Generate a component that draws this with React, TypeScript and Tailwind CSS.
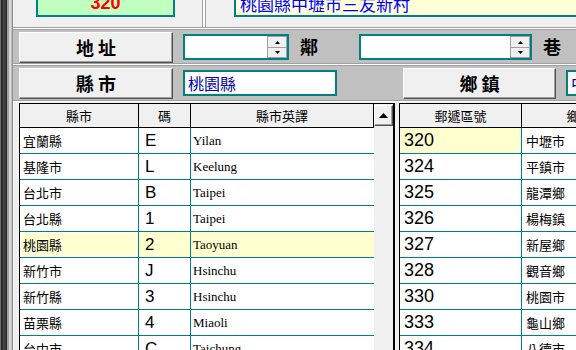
const cjk = { fontFamily: '"Noto Sans CJK TC", "Noto Sans", sans-serif' }
const serif = { fontFamily: '"Liberation Serif", "Times New Roman", serif' }
const sans = { fontFamily: '"Liberation Sans", Arial, sans-serif' }

const counties = [
  ['宜蘭縣', 'E', 'Yilan'],
  ['基隆市', 'L', 'Keelung'],
  ['台北市', 'B', 'Taipei'],
  ['台北縣', '1', 'Taipei'],
  ['桃園縣', '2', 'Taoyuan'],
  ['新竹市', 'J', 'Hsinchu'],
  ['新竹縣', '3', 'Hsinchu'],
  ['苗栗縣', '4', 'Miaoli'],
  ['台中市', 'C', 'Taichung'],
]

const zips = [
  ['320', '中壢市'],
  ['324', '平鎮市'],
  ['325', '龍潭鄉'],
  ['326', '楊梅鎮'],
  ['327', '新屋鄉'],
  ['328', '觀音鄉'],
  ['330', '桃園市'],
  ['333', '龜山鄉'],
  ['334', '八德市'],
]

function Arrow({ up, w = 5 }: { up?: boolean; w?: number }) {
  const h = Math.ceil(w / 2)
  return (
    <svg width={w} height={h} viewBox={`0 0 ${w} ${h}`}>
      <polygon points={up ? `0,${h} ${w},${h} ${w / 2},0` : `0,0 ${w},0 ${w / 2},${h}`} fill="#000" />
    </svg>
  )
}

function Button({ label, className = '' }: { label: string; className?: string }) {
  return (
    <div
      className={`mt-[2px] flex h-[31px] items-center justify-center border border-t-white border-l-white border-r-[#505050] border-b-[#505050] bg-[#f0f0f0] pl-[4px] text-[18px] font-bold tracking-[4px] text-black shadow-[inset_-1px_-1px_0_#a0a0a0] ${className}`}
      style={cjk}
    >
      {label}
    </div>
  )
}

function SpinInput({ className = '' }: { className?: string }) {
  return (
    <div className={`mt-[4px] flex h-[26px] border-2 border-[#008080] bg-white ${className}`}>
      <div className="flex-1" />
      <div className="flex w-[20px] flex-col">
        <div className="flex h-[12px] items-center justify-center border border-[#a0a0a0] bg-[#f0f0f0]">
          <Arrow up />
        </div>
        <div className="flex h-[10px] items-center justify-center border border-t-0 border-[#a0a0a0] bg-[#f0f0f0]">
          <Arrow />
        </div>
      </div>
    </div>
  )
}

function Groove() {
  return <div className="h-[3px] border-y border-[#a0a0a0] bg-white" />
}

export default function App() {
  return (
    <div className="flex h-[350px] w-[576px] overflow-hidden bg-[#f0f0f0]">
      {/* window edge */}
      <div className="flex w-[13px] shrink-0">
        <div className="w-[1px] bg-[#707070]" />
        <div className="w-[6px] bg-linear-to-r from-[#1c1c1c] via-[#4a4a4a] to-[#262626]" />
        <div className="w-[2px] bg-[#a0a0a0]" />
        <div className="w-[2px] bg-[#d8d8d8]" />
        <div className="w-[1px] bg-[#c0c0c0]" />
        <div className="w-[1px] bg-[#909090]" />
      </div>

      <div className="flex min-w-0 flex-1 flex-col">
        {/* top strip */}
        <div className="flex h-[27px] shrink-0 items-start">
          <div className="ml-[23px] flex h-[17px] w-[139px] justify-center overflow-hidden border-x-2 border-b-2 border-[#008080] bg-[#c0ffc0]">
            <div className="-mt-[6px] text-[18px] leading-none font-bold text-[#ff0000]" style={sans}>
              320
            </div>
          </div>
          <div className="ml-[27px] h-full w-[4px] border-x border-[#a0a0a0] bg-white" />
          <div className="ml-[28px] h-[17px] flex-1 overflow-hidden border-b-2 border-l-2 border-[#008080] bg-[#ffffd8] pl-[4px]">
            <div className="-mt-[4px] text-[17px] leading-[16px] whitespace-nowrap text-[#0000ff]" style={cjk}>
              桃園縣中壢市三友新村
            </div>
          </div>
        </div>

        <Groove />

        {/* address row */}
        <div className="flex h-[33px] shrink-0 bg-[#c0c0c0] pl-[6px]">
          <Button label="地址" className="w-[154px]" />
          <SpinInput className="ml-[10px] w-[106px]" />
          <div className="ml-[11px] self-center text-[18px] font-bold text-black" style={cjk}>
            鄰
          </div>
          <SpinInput className="ml-[41px] w-[173px]" />
          <div className="ml-[11px] self-center text-[18px] font-bold text-black" style={cjk}>
            巷
          </div>
        </div>

        <Groove />

        {/* county row */}
        <div className="flex h-[34px] shrink-0 bg-[#c0c0c0] pl-[6px]">
          <Button label="縣市" className="w-[154px]" />
          <div
            className="mt-[4px] ml-[10px] flex h-[26px] w-[154px] items-center border-2 border-[#008080] bg-white pl-[3px] text-[16px] text-[#0000a8]"
            style={cjk}
          >
            桃園縣
          </div>
          <Button label="鄉鎮" className="ml-[66px] w-[153px]" />
          <div
            className="mt-[4px] ml-[10px] flex h-[26px] flex-1 items-center overflow-hidden border-y-2 border-l-2 border-[#008080] bg-white pl-[3px] text-[16px] whitespace-nowrap text-[#0000a8]"
            style={cjk}
          >
            中壢市
          </div>
        </div>

        <div className="h-[2px] shrink-0 border-t border-[#a0a0a0] bg-white" />

        {/* grids */}
        <div className="flex min-h-0 flex-1 overflow-hidden pt-[1px] pl-[6px]">
          <div className="flex w-[376px] shrink-0 border-t border-r-2 border-l border-black">
            <div className="w-[354px]">
              <div className="flex h-[24px] border-b border-black bg-[#f0f0f0] text-[13px] text-black" style={cjk}>
                <div className="flex w-[119px] items-center justify-center border-r border-black">縣市</div>
                <div className="flex w-[52px] items-center justify-center border-r border-black">碼</div>
                <div className="flex w-[183px] items-center justify-center border-r border-black">縣市英譯</div>
              </div>
              {counties.map(([name, code, en], i) => {
                const sel = i === 4
                return (
                  <div
                    key={name}
                    className={`flex h-[26px] border-b border-[#008080] ${sel ? 'bg-[#ffffd0]' : 'bg-white'}`}
                  >
                    <div
                      className={`flex w-[119px] items-center border-r border-[#008080] pl-[3px] text-[13px] text-black ${sel ? 'shadow-[inset_0_0_0_2px_#fffff0]' : ''}`}
                      style={cjk}
                    >
                      {name}
                    </div>
                    <div className="flex w-[52px] items-center border-r border-[#008080] pl-[6px] text-[17px] text-black" style={sans}>
                      {code}
                    </div>
                    <div className="flex w-[183px] items-center pl-[2px] text-[13px] text-black" style={serif}>
                      {en}
                    </div>
                  </div>
                )
              })}
            </div>
            <div className="flex w-[19px] flex-col bg-[#f0f0f0] pt-[1px]">
              <div className="flex h-[21px] items-center justify-center border border-t-white border-l-white border-r-[#505050] border-b-[#505050] bg-[#f0f0f0] shadow-[inset_-1px_-1px_0_#a0a0a0]">
                <Arrow up w={9} />
              </div>
            </div>
          </div>

          <div className="ml-[4px] min-w-0 flex-1 overflow-hidden border-t border-l border-black">
            <div className="w-[300px]">
              <div className="flex h-[24px] border-b border-black bg-[#f0f0f0] text-[13px] text-black" style={cjk}>
                <div className="flex w-[122px] items-center justify-center border-r border-black">郵遞區號</div>
                <div className="flex w-[142px] items-center justify-center border-r border-black">鄉鎮市區</div>
              </div>
              {zips.map(([zip, town], i) => (
                <div key={zip} className="flex h-[26px] border-b border-[#008080] bg-white">
                  <div
                    className={`flex w-[122px] items-center border-r border-[#008080] pl-[4px] text-[18px] text-black ${i === 0 ? 'bg-[#ffffd0]' : ''}`}
                    style={sans}
                  >
                    {zip}
                  </div>
                  <div className="flex w-[142px] items-center pl-[4px] text-[13px] text-black" style={cjk}>
                    {town}
                  </div>
                </div>
              ))}
            </div>
          </div>
        </div>
      </div>
    </div>
  )
}
